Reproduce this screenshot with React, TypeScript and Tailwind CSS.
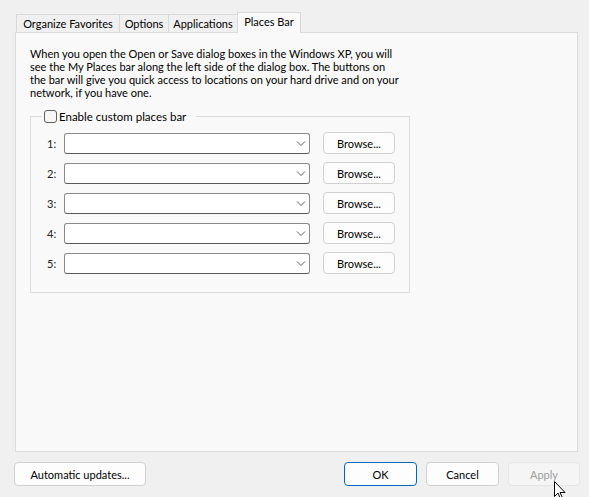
import React from "react";

const tabs = [
  { label: "Organize Favorites", w: "w-[104px]" },
  { label: "Options", w: "w-[50px]" },
  { label: "Applications", w: "w-[70px]" },
];
const rows = [1, 2, 3, 4, 5];

export default function App() {
  return (
    <div className="relative w-[589px] h-[497px] overflow-hidden bg-[#f0f0f0] text-[11px] leading-[13px] text-black font-['Segoe_UI','Lato',sans-serif]">
      {/* Tab strip */}
      <div className="flex items-end pl-[16px] pt-[13px] h-[33px]">
        {tabs.map((t) => (
          <div key={t.label} className={`${t.w} h-[18px] flex items-center justify-center border border-b-0 border-[#d9d9d9] -ml-px first:ml-0 bg-[#f0f0f0] mb-px`}>
            {t.label}
          </div>
        ))}
        <div className="relative z-10 w-[64px] h-[21px] pb-[3px] flex items-center justify-center border border-b-0 border-[#d9d9d9] -ml-px bg-[#f9f9f9]">
          Places Bar
        </div>
      </div>

      {/* Panel */}
      <div className="-mt-px ml-[15px] w-[563px] h-[420px] border border-[#dcdcdc] bg-[#f9f9f9] pl-[14px] pt-[14px]">
        <p className="whitespace-nowrap">
          When you open the Open or Save dialog boxes in the Windows XP, you will
          <br />
          see the My Places bar along the left side of the dialog box. The buttons on
          <br />
          the bar will give you quick access to locations on your hard drive and on your
          <br />
          network, if you have one.
        </p>

        <fieldset className="mt-[11px] w-[380px] h-[183px] border border-[#dcdcdc] pl-[16px] pr-[13px]">
          <legend className="-ml-[5px] pl-[2px] pr-[10px] flex items-center gap-[2px] -mb-[1px]">
            <span className="w-[13px] h-[13px] rounded-[3px] border border-[#5f5f5f] bg-[#f6f6f6]" />
            <span className="text-[11.5px]">Enable custom places bar</span>
          </legend>
          <div className="mt-[10px] flex flex-col gap-[8px]">
            {rows.map((n) => (
              <div key={n} className="flex items-center h-[22px]">
                <span className="w-[17px] text-[#222]">{n}:</span>
                <div className="relative w-[246px] h-[21px] rounded-[3px] border border-[#8a8a8a] border-b-[#5a5a5a] bg-white">
                  <svg className="absolute right-[3px] top-[6px]" width="10" height="7" viewBox="0 0 10 7">
                    <path d="M1 1.5 L5 5.5 L9 1.5" fill="none" stroke="#5c5c5c" strokeWidth="1" />
                  </svg>
                </div>
                <div className="ml-[13px] w-[72px] h-[22px] rounded-[4px] border border-[#d0d0d0] bg-[#fdfdfd] flex items-center justify-center">
                  Browse...
                </div>
              </div>
            ))}
          </div>
        </fieldset>
      </div>

      {/* Bottom buttons */}
      <div className="flex items-center mt-[10px] pl-[14px] pr-[9px]">
        <div className="w-[132px] h-[24px] rounded-[4px] border border-[#d0d0d0] bg-[#fdfdfd] flex items-center justify-center">
          Automatic updates...
        </div>
        <div className="ml-auto flex gap-[9px]">
          <div className="w-[73px] h-[24px] rounded-[4px] border border-[#0067c0] bg-[#fdfdfd] flex items-center justify-center">
            OK
          </div>
          <div className="w-[73px] h-[24px] rounded-[4px] border border-[#d0d0d0] bg-[#fdfdfd] flex items-center justify-center">
            Cancel
          </div>
          <div className="w-[72px] h-[24px] rounded-[4px] border border-[#e5e5e5] bg-[#f5f5f5] text-[#9d9d9d] flex items-center justify-center">
            Apply
          </div>
        </div>
      </div>

      {/* Mouse cursor */}
      <svg className="absolute left-[554px] top-[481px]" width="12" height="19" viewBox="0 0 12 19">
        <path d="M0.5 0.5 L0.5 15.5 L4 12 L6.5 18 L8.5 17 L6 11.5 L11 11.5 Z" fill="white" stroke="black" strokeWidth="1" strokeLinejoin="round" />
      </svg>
    </div>
  );
}
